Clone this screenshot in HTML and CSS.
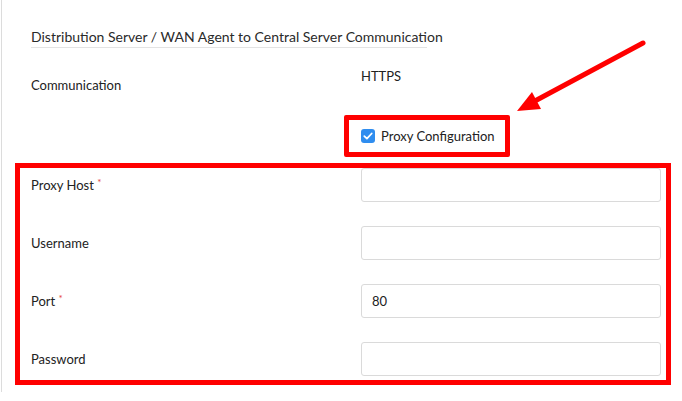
FILE: index.html
```html
<!DOCTYPE html>
<html lang="en">

<head>
    <meta charset="UTF-8">
    <meta name="viewport" content="width=device-width, initial-scale=1.0">
    <title>Server Communication</title>
    <link rel="stylesheet" href="styles.css">
</head>

<body>
    <div class="page">
        <h3 class="section_title">Distribution Server / WAN Agent to Central Server Communication</h3>

        <div class="row_comm">
            <div class="label label_comm">Communication</div>
            <div class="value">HTTPS</div>
        </div>

        <div class="row_proxy">
            <label class="proxy_toggle">
                <span class="check">
                    <svg width="10" height="8" viewBox="0 0 10 8">
                        <path d="M1.3 4.2 L3.9 6.6 L8.7 1.5" fill="none" stroke="#fff" stroke-width="1.8" stroke-linecap="round" stroke-linejoin="round"/>
                    </svg>
                </span>
                Proxy Configuration
            </label>
        </div>

        <!-- Proxy fields (highlighted) -->
        <div class="fields">
            <div class="field_grid">
                <div class="label">Proxy Host <span class="req">*</span></div>
                <input type="text" class="input">

                <div class="label">Username</div>
                <input type="text" class="input">

                <div class="label">Port <span class="req">*</span></div>
                <input type="text" class="input" value="80">

                <div class="label">Password</div>
                <input type="password" class="input">
            </div>
        </div>

        <svg class="arrow" width="682" height="401" viewBox="0 0 682 401">
            <line x1="643" y1="43" x2="533" y2="102" stroke="#ff0000" stroke-width="5" stroke-linecap="round"/>
            <polygon points="517,111 532,92 541,109" fill="#ff0000"/>
        </svg>
    </div>
</body>

</html>
```

FILE: styles.css
```css
/* Global Styles */
body {
    margin: 0;
    padding: 0;
    font-family: 'Lato', 'Liberation Sans', sans-serif;
    color: #222;
    background: #fff;
}

.page {
    position: relative;
    margin-left: 1px;
    border-left: 1px solid #dcdcdc;
    padding-left: 29px;
    height: 392px;
    box-sizing: border-box;
}

.section_title {
    margin: 0;
    padding-top: 27px;
    width: 396px;
    white-space: nowrap;
    font-size: 14px;
    font-weight: normal;
    line-height: 20px;
    color: #2a2a2a;
    border-bottom: 1px solid #e3e3e3;
}

.label,
.value {
    font-size: 13px;
    line-height: 18px;
}

/* Communication row */
.row_comm {
    display: grid;
    grid-template-columns: 330px 1fr;
    margin-top: 19px;
}

.label_comm {
    padding-top: 9px;
}

/* Proxy checkbox */
.row_proxy {
    margin-top: 21px;
    padding-left: 313px;
}

.proxy_toggle {
    display: inline-flex;
    align-items: center;
    gap: 6px;
    height: 42px;
    box-sizing: border-box;
    padding: 0 10px 0 12px;
    border: 5px solid #ff0000;
    border-radius: 2px;
    font-size: 13px;
    color: #222;
}

.check {
    display: inline-flex;
    align-items: center;
    justify-content: center;
    width: 14px;
    height: 14px;
    border-radius: 3px;
    background: #2f8def;
}

/* Proxy fields */
.fields {
    margin-top: 13px;
    margin-left: -11px;
    width: 646px;
    height: 212px;
    box-sizing: border-box;
    padding: 0 5px 0 11px;
    outline: 5px solid #ff0000;
}

.field_grid {
    display: grid;
    grid-template-columns: 330px 300px;
    grid-auto-rows: 34px;
    row-gap: 24px;
    align-items: center;
    margin-top: -2px;
}

.req {
    color: #e5443c;
    font-size: 10px;
    vertical-align: top;
    position: relative;
    top: -3px;
}

.input {
    width: 300px;
    height: 34px;
    box-sizing: border-box;
    padding: 0 10px;
    border: 1px solid #dadada;
    border-radius: 3px;
    font-family: 'Lato', 'Liberation Sans', sans-serif;
    font-size: 13px;
    color: #222;
    background: #fff;
}

.arrow {
    position: absolute;
    top: 0;
    left: -2px;
    pointer-events: none;
}
```
